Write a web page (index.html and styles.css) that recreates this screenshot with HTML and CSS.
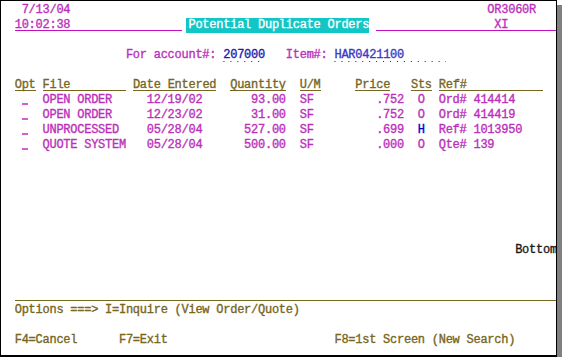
FILE: index.html
```html
<!DOCTYPE html>
<html>
<head>
<meta charset="utf-8">
<link rel="stylesheet" href="styles.css">
</head>
<body>
<div class="screen">
<div class="row mag"> 7/13/04                                                            OR3060R</div>
<div class="row mag"><span class="ul">10:02:38                </span> <span class="title">Potential Duplicate Orders</span> <span class="ul">                 XI       </span></div>
<div class="row"></div>
<div class="row mag">                For account#: <span class="fld dk">207000</span>   Item#: <span class="fld lt">HAR0421100      </span></div>
<div class="row"></div>
<div class="row olive"><span class="ul">Opt</span> <span class="ul">File        </span> <span class="ul">Date Entered</span>  <span class="ul">Quantity</span>  <span class="ul">U/M</span>     <span class="ul">Price</span>   <span class="ul">Sts</span> <span class="ul">Ref#           </span></div>
<div class="row mag"> <span class="sel"> </span>  OPEN ORDER     12/19/02       93.00  SF         .752  O  Ord# 414414</div>
<div class="row mag"> <span class="sel"> </span>  OPEN ORDER     12/23/02       31.00  SF         .752  O  Ord# 414419</div>
<div class="row mag"> <span class="sel"> </span>  UNPROCESSED    05/28/04      527.00  SF         .699  <span class="blue">H</span>  Ref# 1013950</div>
<div class="row mag"> <span class="sel"> </span>  QUOTE SYSTEM   05/28/04      500.00  SF         .000  O  Qte# 139</div>
<div class="row"></div>
<div class="row"></div>
<div class="row"></div>
<div class="row"></div>
<div class="row"></div>
<div class="row"></div>
<div class="row dark">                                                                        Bottom</div>
<div class="row"></div>
<div class="row"></div>
<div class="row olive"><span class="ul">                                                                              </span></div>
<div class="row olive">Options ===&gt; I=Inquire (View Order/Quote)</div>
<div class="row"></div>
<div class="row olive">F4=Cancel      F7=Exit                        F8=1st Screen (New Search)</div>
<div class="row"></div>
</div>
</body>
</html>
```

FILE: styles.css
```css
html, body {
  margin: 0;
  padding: 0;
  background: #ffffff;
}

.screen {
  width: 541px;
  height: 352px;
  padding: 2px 0 0 13.7px;
  border-style: solid;
  border-color: #000000;
  border-width: 1px 1px 2px 1px;
  background: #ffffff;
  box-shadow: 5px 5px 0 #808080;
  overflow: hidden;
  font-family: "Liberation Mono", "DejaVu Sans Mono", monospace;
  font-size: 12px;
  letter-spacing: -0.25px;
  -webkit-text-stroke: 0.35px currentColor;
}

.row {
  height: 15px;
  line-height: 15px;
  white-space: pre;
}

.row > span {
  display: inline-block;
  height: 15px;
  vertical-align: top;
}

.mag { color: #bb30bb; }
.olive { color: #76661e; }
.dark { color: #1a1a1a; }
.blue { color: #0000cc; }

.ul {
  background-image: linear-gradient(currentColor, currentColor);
  background-repeat: no-repeat;
  background-position: 0 12px;
  background-size: 100% 1px;
}

.mag .ul {
  background-image: linear-gradient(#c010c0, #c010c0);
}

.title {
  background: #12c6c6;
  color: #ffffff;
  margin-left: -2px;
  padding-left: 2px;
}

.fld {
  background-image: linear-gradient(to right, #202040 1px, transparent 1px);
  background-repeat: repeat-x;
  background-position: 0.5px 13px;
  background-size: 6.95px 1px;
}

.fld.dk { color: #1c1cb0; }
.fld.lt { color: #3a3ac6; }

.sel {
  background-image: linear-gradient(#d060d0, #d060d0);
  background-repeat: no-repeat;
  background-position: 0 10px;
  background-size: 6px 2px;
}
```
